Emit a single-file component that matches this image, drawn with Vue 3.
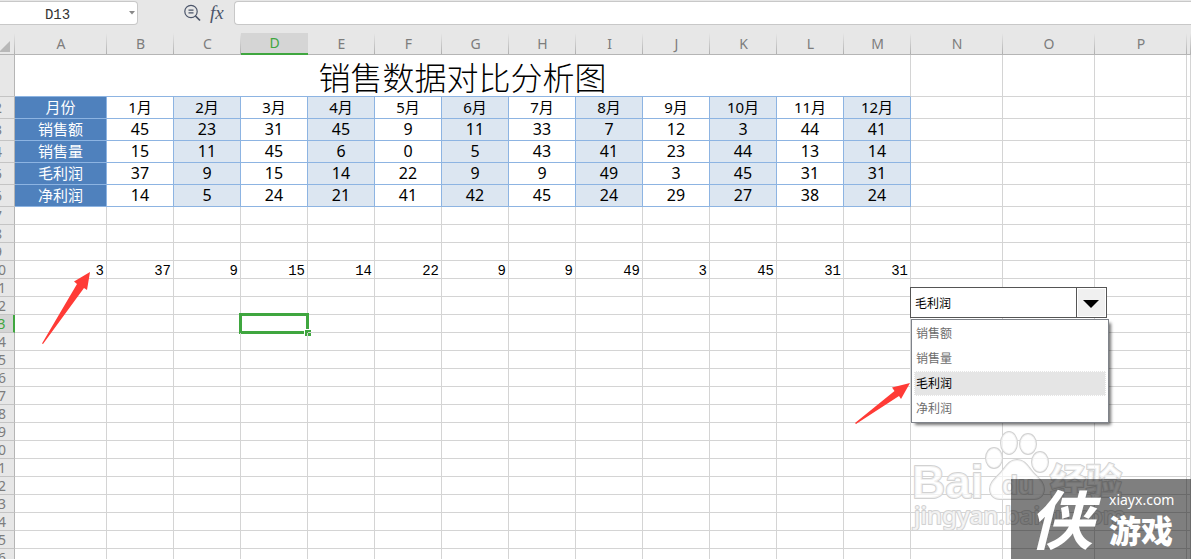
<script setup>
import { ref } from 'vue'

const columns = 'ABCDEFGHIJKLM'.split('')
const extraColumns = ['N', 'O', 'P', '']
const metrics = [
  ['月份', '1月', '2月', '3月', '4月', '5月', '6月', '7月', '8月', '9月', '10月', '11月', '12月'],
  ['销售额', 45, 23, 31, 45, 9, 11, 33, 7, 12, 3, 44, 41],
  ['销售量', 15, 11, 45, 6, 0, 5, 43, 41, 23, 44, 13, 14],
  ['毛利润', 37, 9, 15, 14, 22, 9, 9, 49, 3, 45, 31, 31],
  ['净利润', 14, 5, 24, 21, 41, 42, 45, 24, 29, 27, 38, 24]
]
const lookup = [3, 37, 9, 15, 14, 22, 9, 9, 49, 3, 45, 31, 31]
const rows = Array.from({ length: 20 }, (_, i) => i + 7)
const options = ['销售额', '销售量', '毛利润', '净利润']
const picked = ref('毛利润')
const cellName = ref('D13')
const formula = ref('')
</script>

<template>
  <main class="page">
    <header class="toolbar">
      <div class="name-box">
        <input v-model="cellName" class="name-input" aria-label="名称框">
        <svg class="caret" width="6" height="4" viewBox="0 0 6 4" aria-hidden="true"><path d="M0 0h6L3 3.5z" fill="#888" /></svg>
      </div>
      <div class="tools">
        <button class="tool" type="button" aria-label="查找">
          <svg width="18" height="18" viewBox="0 0 18 18" fill="none" stroke="#4b556a" stroke-width="1.2">
            <circle cx="7" cy="7.500" r="6.2" /><path d="M11.500 12l4.500 4.500" stroke-width="1.7" /><path d="M4.500 6.200h5M4.500 8.800h5" />
          </svg>
        </button>
        <button class="tool fx" type="button" aria-label="插入函数">fx</button>
      </div>
      <input v-model="formula" class="formula" aria-label="编辑栏">
    </header>

    <div class="sheet">
      <table>
        <colgroup>
          <col class="w-index"><col class="w-wide"><col v-for="n in 12" :key="n" class="w-month">
          <col class="w-wide"><col class="w-wide"><col class="w-wide"><col>
        </colgroup>
        <thead>
          <tr>
            <th class="corner"><svg width="11" height="11" viewBox="0 0 11 11" aria-hidden="true"><path d="M11 0v11H0z" fill="#b8b8b8" /></svg></th>
            <th v-for="c in columns" :key="c" scope="col" :class="{ current: c === 'D' }">{{ c }}</th>
            <th v-for="c in extraColumns" :key="c" scope="col">{{ c }}</th>
          </tr>
        </thead>
        <tbody>
          <tr class="title-row">
            <th scope="row"></th>
            <td colspan="13" class="title">销售数据对比分析图</td>
            <td v-for="c in extraColumns" :key="c"></td>
          </tr>
          <tr v-for="(row, r) in metrics" :key="r" class="metric-row">
            <th scope="row">{{ r + 2 }}</th>
            <td v-for="(v, i) in row" :key="i" :class="{ label: i === 0, tinted: i > 0 && i % 2 === 0, month: r === 0 }" class="metric">{{ v }}</td>
            <td v-for="c in extraColumns" :key="c"></td>
          </tr>
          <tr v-for="r in rows" :key="r" :class="{ 'current-row': r === 13 }">
            <th scope="row">{{ r }}</th>
            <td v-for="(c, i) in columns" :key="c" class="plain">
              <template v-if="r === 10">{{ lookup[i] }}</template>
              <div v-if="r === 13 && c === 'D'" class="selection"><i></i></div>
            </td>
            <td v-for="c in extraColumns" :key="c"></td>
          </tr>
        </tbody>
      </table>
    </div>

    <svg class="watermark" width="230" height="120" viewBox="0 0 230 120" aria-hidden="true">
      <g class="mark">
        <text x="7" y="77" font-size="46" class="latin">Bai</text>
        <ellipse cx="89" cy="37" rx="8" ry="10" /><ellipse cx="104" cy="22" rx="8" ry="11" />
        <ellipse cx="123" cy="23" rx="8" ry="10" /><ellipse cx="135" cy="41" rx="8" ry="10" />
        <path d="M112 39c-7 0-10 5-14 10-5 7-13 11-13 19 0 6 4 10 10 10h34c6 0 10-4 10-10 0-8-8-12-13-19-4-5-7-10-14-10z" />
        <text x="97" y="73" font-size="26" class="latin">du</text>
        <text x="145" y="74" font-size="36" class="han">经验</text>
        <text x="9" y="103" font-size="24" class="site-mark">jingyan.baidu.com</text>
      </g>
    </svg>

    <div class="combo">
      <select id="metric" v-model="picked" aria-label="指标">
        <option v-for="o in options" :key="o">{{ o }}</option>
      </select>
      <span class="combo-arrow"><svg width="16" height="8" viewBox="0 0 16 8" aria-hidden="true"><path d="M0 0h16L8 8z" /></svg></span>
    </div>
    <ul class="menu" role="listbox" aria-label="指标">
      <li v-for="o in options" :key="o" role="option" :aria-selected="o === picked" :class="{ active: o === picked }" @click="picked = o">{{ o }}</li>
    </ul>

    <svg class="pointer pointer-left" width="50" height="74" viewBox="0 0 50 74" aria-hidden="true"><path d="M49 1L33 10.500l3 2.500L1 72.500l1 .5L43 17l3 2z" /></svg>
    <svg class="pointer pointer-right" width="56" height="43" viewBox="0 0 56 43" aria-hidden="true"><path d="M55 1L37 5.500l2.500 3.500L0 41l1 1L44 14l2 3z" /></svg>

    <div class="badge">
      <span class="badge-logo">侠</span>
      <span class="badge-text"><span class="site">xiayx.com</span><span class="game">游戏</span></span>
    </div>
  </main>
</template>

<style>
body { margin: 0; overflow: hidden; }
</style>

<style scoped>
* { box-sizing: border-box; }
.page {
  position: relative;
  height: 100vh;
  overflow: hidden;
  background: #fff;
  font-family: "Noto Sans", "Noto Sans CJK SC", sans-serif;
}
.toolbar {
  display: flex;
  align-items: flex-start;
  height: 33px;
  padding-top: 1px;
  background: #e7e7e7;
}
.name-box {
  display: flex;
  align-items: center;
  width: 138px;
  height: 24px;
  padding-right: 2px;
  border: 1px solid #c8c8c8;
  border-left: 0;
  border-radius: 0 4px 4px 0;
  background: #fff;
}
.name-input {
  flex: 1;
  min-width: 0;
  padding: 3px 14px 0 0;
  border: 0;
  outline: 0;
  background: none;
  text-align: center;
  font: 14px "Liberation Mono", monospace;
  color: #333;
}
.tools {
  display: flex;
  align-items: center;
  gap: 8px;
  width: 96px;
  height: 24px;
  padding-left: 46px;
}
.tool { display: flex; padding: 0; border: 0; background: none; color: #4b556a; }
.fx { font: italic 19px/22px "Liberation Serif", serif; }
.formula {
  flex: 1;
  min-width: 0;
  height: 24px;
  border: 1px solid #c8c8c8;
  border-right: 0;
  border-radius: 4px 0 0 4px;
  outline: 0;
  background: #fff;
}
.sheet { margin-left: -18px; }
table {
  width: 100%;
  table-layout: fixed;
  border-collapse: separate;
  border-spacing: 0;
}
.w-index { width: 33px; }
.w-wide { width: 92px; }
.w-month { width: 67px; }
th, td { height: 18px; padding: 0; line-height: 17px; }
td { border-right: 1px solid #d4d4d4; border-bottom: 1px solid #d4d4d4; }
th {
  border-bottom: 1px solid #c4c4c4;
  background: #e7e7e7;
  color: #7d7d7d;
  font-size: 14px;
  font-weight: 400;
}
thead th {
  height: 22px;
  border-bottom-color: #b5b5b5;
  background: linear-gradient(#e7e7e7, #b0b0b0) right / 1px 100% no-repeat #e7e7e7;
  line-height: 21px;
}
thead .current { border-bottom: 2px solid #3fa63f; background: #d5d5d5; color: #3fa63f; line-height: 20px; }
.corner { padding: 6px 5px 0 0; text-align: right; }
.corner svg { display: block; margin-left: auto; }
tbody th { border-right: 1px solid #b5b5b5; }
.current-row th { border-right: 2px solid #3fa63f; background: #d5d5d5; color: #3fa63f; }
.title-row th, .title-row td { height: 42px; }
.title-row .title {
  border-bottom-color: #8db4e2;
  text-align: center;
  font: 300 32px/40px "Noto Sans CJK SC", sans-serif;
  color: #000;
}
.metric-row th, .metric-row td { height: 22px; line-height: 21px; }
.metric { border-color: #8db4e2; text-align: center; font-size: 16px; color: #000; }
.metric.month { font-size: 15px; }
.metric.tinted { background: #dce6f1; }
.metric.label { background: #4f81bd; font-size: 15px; color: #fff; }
.plain {
  position: relative;
  padding: 4px 2px 0 0;
  text-align: right;
  font: 14px/13px "Liberation Mono", monospace;
  color: #000;
}
.selection {
  position: absolute;
  inset: -2px;
  border: 3px solid #3fa63f;
}
.selection i {
  position: absolute;
  right: -5px;
  bottom: -5px;
  width: 7px;
  height: 7px;
  border: 1px solid #fff;
  border-width: 1px 0 0 1px;
  background: #3fa63f;
}
.combo {
  position: absolute;
  left: 910px;
  top: 287px;
  display: flex;
  width: 197px;
  height: 31px;
  border: 1px solid #555;
  background: #fff;
}
.combo select {
  flex: 1;
  appearance: none;
  padding: 0 4px;
  border: 0;
  border-right: 1px solid #555;
  border-radius: 0;
  background: #fff;
  font: 12px "Noto Sans CJK SC", sans-serif;
  color: #000;
}
.combo-arrow {
  display: flex;
  align-items: center;
  justify-content: center;
  width: 29px;
  padding: 2px 2px 0 0;
  border: 1px solid #fff;
  background: #f0f0f0;
}
.menu {
  position: absolute;
  left: 911px;
  top: 319px;
  width: 198px;
  margin: 0;
  padding: 1px 2px;
  border: 1px solid #7f838a;
  background: #fff;
  box-shadow: 3px 3px 3px -1px rgba(0, 0, 0, .55);
  list-style: none;
  font: 12px/22px "Noto Sans CJK SC", sans-serif;
  color: #6d6d6d;
}
.menu li { height: 25px; padding: 0 1px; border: 1px solid transparent; }
.menu .active { background: #e5e5e5; border: 1px dotted #fff; color: #000; }
.pointer { position: absolute; fill: #ff3b36; }
.pointer-left { left: 41px; top: 271px; }
.pointer-right { left: 855px; top: 382px; }
.watermark { position: absolute; left: 905px; top: 421px; }
.mark { fill: rgba(255, 255, 255, .7); stroke: #d2d2d2; stroke-width: 2px; stroke-linejoin: round; paint-order: stroke; }
.latin { font-family: "Liberation Sans", sans-serif; font-weight: 700; }
.site-mark { font-family: "Noto Sans", sans-serif; font-weight: 500; }
.han { font-family: "Noto Sans CJK SC", sans-serif; font-weight: 900; }
.badge {
  position: absolute;
  right: 0;
  bottom: 0;
  display: flex;
  align-items: center;
  gap: 16px;
  width: 180px;
  height: 80px;
  padding-left: 18px;
  background: rgba(0, 0, 0, .5);
  color: #fff;
}
.badge-logo { padding-bottom: 6px; font: italic 700 64px/72px "Noto Sans CJK SC", sans-serif; }
.badge-text { display: flex; flex-direction: column; }
.site { font-size: 14px; line-height: 20px; }
.game { font: 900 32px/38px "Noto Sans CJK SC", sans-serif; }
</style>
